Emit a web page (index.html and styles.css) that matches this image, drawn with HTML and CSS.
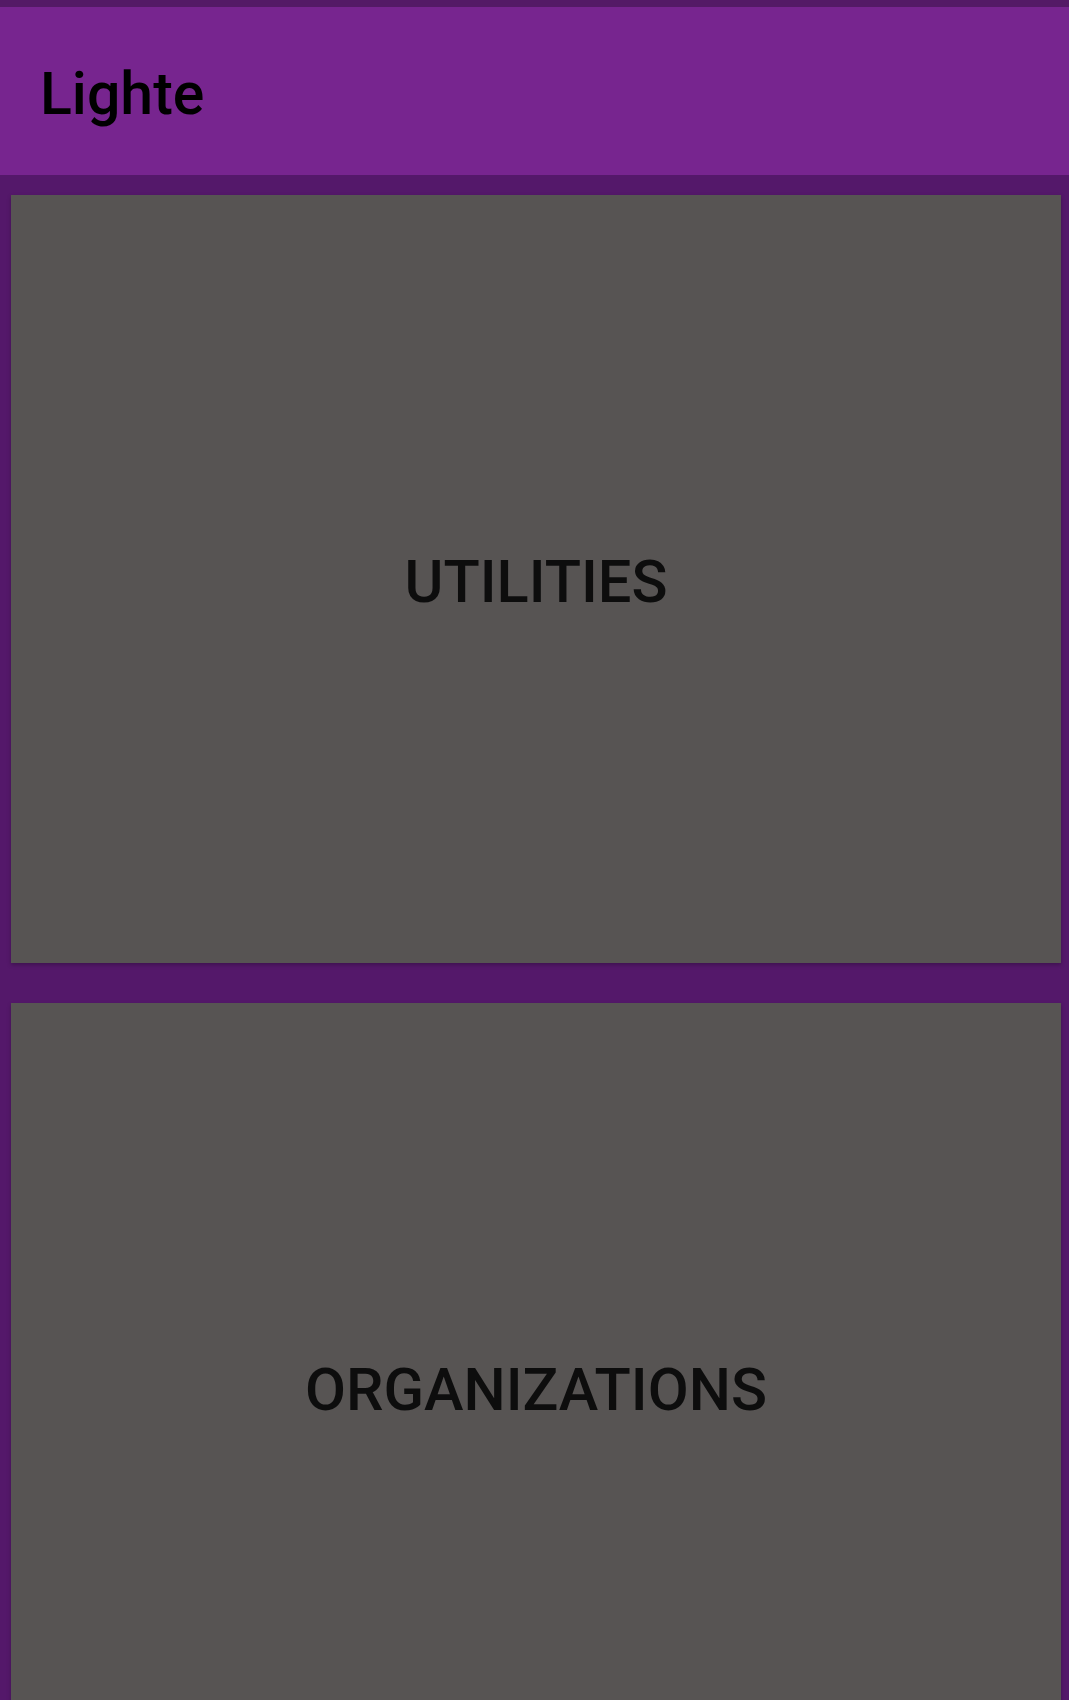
FILE: index.html
```html
<!DOCTYPE html>
<html>
<head>
<meta charset="utf-8">
<link rel="stylesheet" href="styles.css">
</head>
<body>
<div class="status"></div>
<header class="appbar"><h1 class="title">Lighte</h1></header>
<main class="list">
  <div class="card"><span class="label">UTILITIES</span></div>
  <div class="card"><span class="label">ORGANIZATIONS</span></div>
</main>
</body>
</html>
```
FILE: styles.css
```css
html, body {
  margin: 0;
  padding: 0;
  background: #54186a;
  font-family: Roboto, "Liberation Sans", sans-serif;
  overflow: hidden;
}
.status {
  height: 7px;
  background: #541a66;
}
.appbar {
  height: 168px;
  background: #77258f;
  display: flex;
  align-items: center;
  padding-left: 40px;
}
.title {
  margin: 0;
  font-size: 59px;
  font-weight: 500;
  color: #000;
  line-height: 1;
  padding-top: 4px;
}
.list {
  display: flex;
  flex-direction: column;
  gap: 40px;
  padding: 20px 8px 0 11px;
}
.card {
  height: 768px;
  background: #575453;
  display: flex;
  align-items: center;
  justify-content: center;
  box-shadow: 0 2px 4px rgba(0,0,0,0.25);
}
.label {
  font-size: 59.5px;
  font-weight: 500;
  color: #0d0d0d;
  line-height: 1;
  padding-top: 8px;
}
```
